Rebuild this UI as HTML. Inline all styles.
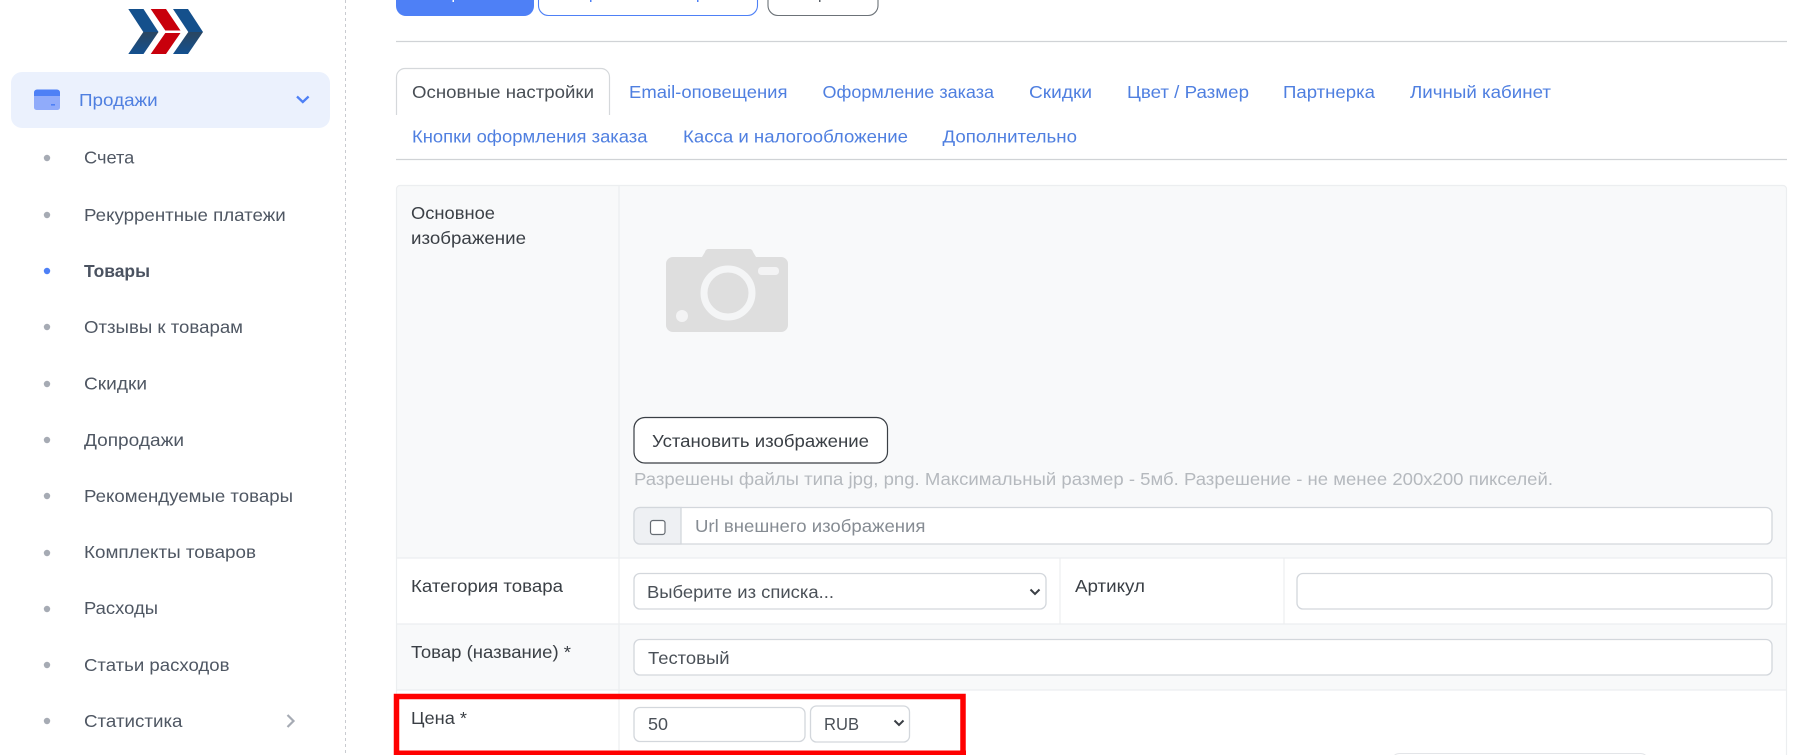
<!DOCTYPE html>
<html lang="ru"><head><meta charset="utf-8"><title>Товар</title>
<style>
html,body{margin:0;padding:0;background:#fff;width:1806px;height:755px;overflow:hidden}
svg{display:block}
text{font-family:"Liberation Sans","DejaVu Sans",sans-serif;font-size:17.5px}
.s{fill:#4f5763}.b{fill:#4f7fe0}.d{fill:#3a3f45}.g{fill:#b5b9be}.p{fill:#7b8188}
.i{fill:#fff;stroke:#d3d7dc;stroke-width:1.300}
.l{stroke:#eceef0;stroke-width:1.200;fill:none}
.c{fill:none;stroke:#3a3f45;stroke-width:1.8}
</style></head><body>
<svg xmlns="http://www.w3.org/2000/svg" width="1806" height="755" viewBox="0 0 1806 755">
<defs><linearGradient id="gr" x1="0" y1="0" x2="0" y2="1"><stop offset="0" stop-color="#2a4661"/><stop offset="1" stop-color="#14508f"/></linearGradient></defs>

<!-- logo -->
<polygon points="128.3,9 143.500,9 158.500,32 143.3,32" fill="#14508c"/>
<polygon points="143.3,32 158.500,32 143.500,54 128.3,54" fill="url(#gr)"/>
<polygon points="150.7,9 166,9 180.500,30.500 165.3,30.500" fill="#c8000c"/>
<polygon points="165.3,33 180.500,33 166,54 150.7,54" fill="#c8000c"/>
<polygon points="173,9 188,9 203,32 188.3,32" fill="#14508c"/>
<polygon points="188.3,32 203,32 188,54 173,54" fill="url(#gr)"/>

<!-- sidebar -->
<rect x="11" y="72" width="319" height="56" rx="11" fill="#ebf1fd"/>
<rect x="34" y="90" width="26" height="20" rx="2.5" fill="#90abfa"/>
<path d="M34 96v-3.500a3 3 0 0 1 3-3h20a3 3 0 0 1 3 3V96z" fill="#4e80f6"/>
<rect x="51" y="104" width="4" height="1.600" fill="#4e80f6"/>
<text x="79" y="106" class="b" textLength="78.700" lengthAdjust="spacingAndGlyphs">Продажи</text>
<path d="M297 96.500l5.800 5.500 5.800-5.500" fill="none" stroke="#4e80f6" stroke-width="2.300"/>

<g fill="#a6abb4">
<circle cx="47" cy="158" r="3.200"/><circle cx="47" cy="215" r="3.200"/>
<circle cx="47" cy="327" r="3.200"/><circle cx="47" cy="384" r="3.200"/><circle cx="47" cy="440" r="3.200"/>
<circle cx="47" cy="496" r="3.200"/><circle cx="47" cy="553" r="3.200"/><circle cx="47" cy="609" r="3.200"/>
<circle cx="47" cy="665" r="3.200"/><circle cx="47" cy="721" r="3.200"/>
</g>
<circle cx="47" cy="271" r="3.200" fill="#4e80f6"/>
<text x="84" y="163.500" class="s" textLength="50.300" lengthAdjust="spacingAndGlyphs">Счета</text>
<text x="84" y="221" class="s" textLength="201.700" lengthAdjust="spacingAndGlyphs">Рекуррентные платежи</text>
<text x="84" y="277" style="fill:#4a5260;font-weight:bold" textLength="66" lengthAdjust="spacingAndGlyphs">Товары</text>
<text x="84" y="333" class="s" textLength="159" lengthAdjust="spacingAndGlyphs">Отзывы к товарам</text>
<text x="84" y="389.500" class="s" textLength="63" lengthAdjust="spacingAndGlyphs">Скидки</text>
<text x="84" y="446" class="s" textLength="100" lengthAdjust="spacingAndGlyphs">Допродажи</text>
<text x="84" y="502" class="s" textLength="209" lengthAdjust="spacingAndGlyphs">Рекомендуемые товары</text>
<text x="84" y="558" class="s" textLength="172" lengthAdjust="spacingAndGlyphs">Комплекты товаров</text>
<text x="84" y="614" class="s" textLength="74" lengthAdjust="spacingAndGlyphs">Расходы</text>
<text x="84" y="671" class="s" textLength="145.500" lengthAdjust="spacingAndGlyphs">Статьи расходов</text>
<text x="84" y="727" class="s" textLength="98.500" lengthAdjust="spacingAndGlyphs">Статистика</text>
<path d="M287.500 715l6 6-6 6" fill="none" stroke="#a6abb4" stroke-width="2.200"/>
<line x1="345.500" y1="0" x2="345.500" y2="755" stroke="#c9cbd0" stroke-width="1" stroke-dasharray="3 3"/>

<!-- top buttons -->
<rect x="396" y="-20" width="138" height="36" rx="10" fill="#4e80f6"/>
<rect x="538.500" y="-20" width="219" height="35.500" rx="10" fill="#fff" stroke="#4e80f6" stroke-width="1.100"/>
<rect x="768" y="-20" width="110" height="35.500" rx="10" fill="#fff" stroke="#6c7278" stroke-width="1.100"/>
<rect x="452.500" y="0" width="1.500" height="2" fill="#fff"/>
<rect x="590" y="0" width="1.500" height="2" fill="#4e80f6"/><rect x="697" y="0" width="1.500" height="2" fill="#4e80f6"/>
<rect x="819" y="0" width="1.500" height="2" fill="#5a6068"/>
<line x1="396" y1="41.500" x2="1787" y2="41.500" stroke="#d0d3d6" stroke-width="1.300"/>

<!-- tabs -->
<path d="M396.500 115V77a8.500 8.500 0 0 1 8.500-8.500h196a8.500 8.500 0 0 1 8.500 8.500v38" fill="#fff" stroke="#d5d8db" stroke-width="1.200"/>
<text x="412" y="98" class="d" textLength="182" lengthAdjust="spacingAndGlyphs" style="fill:#484e55">Основные настройки</text>
<text x="629" y="98" class="b" textLength="158.500" lengthAdjust="spacingAndGlyphs">Email-оповещения</text>
<text x="822.500" y="98" class="b" textLength="171.500" lengthAdjust="spacingAndGlyphs">Оформление заказа</text>
<text x="1029" y="98" class="b" textLength="63" lengthAdjust="spacingAndGlyphs">Скидки</text>
<text x="1127" y="98" class="b" textLength="122" lengthAdjust="spacingAndGlyphs">Цвет / Размер</text>
<text x="1283" y="98" class="b" textLength="92" lengthAdjust="spacingAndGlyphs">Партнерка</text>
<text x="1410" y="98" class="b" textLength="141" lengthAdjust="spacingAndGlyphs">Личный кабинет</text>
<text x="412" y="142.500" class="b" textLength="235.500" lengthAdjust="spacingAndGlyphs">Кнопки оформления заказа</text>
<text x="683" y="142.500" class="b" textLength="225" lengthAdjust="spacingAndGlyphs">Касса и налогообложение</text>
<text x="942.500" y="142.500" class="b" textLength="134.500" lengthAdjust="spacingAndGlyphs">Дополнительно</text>
<line x1="396" y1="159.500" x2="1787" y2="159.500" stroke="#d0d3d6" stroke-width="1.300"/>

<!-- table -->
<path d="M396.500 558V189a3.500 3.500 0 0 1 3.500-3.500h1383a3.500 3.500 0 0 1 3.500 3.500v369z" fill="#f8f9fa"/>
<rect x="396.500" y="624" width="1390" height="66" fill="#f8f9fa"/>
<path d="M396.500 760V189a3.500 3.500 0 0 1 3.500-3.500h1383a3.500 3.500 0 0 1 3.500 3.500v571" class="l"/>
<line x1="396" y1="558" x2="1787" y2="558" class="l"/>
<line x1="396" y1="624" x2="1787" y2="624" class="l"/>
<line x1="396" y1="690" x2="1787" y2="690" class="l"/>
<line x1="619" y1="185" x2="619" y2="755" class="l"/>
<line x1="1060" y1="558" x2="1060" y2="624" class="l"/>
<line x1="1284" y1="558" x2="1284" y2="624" class="l"/>

<text x="411" y="219" class="d" textLength="84" lengthAdjust="spacingAndGlyphs">Основное</text>
<text x="411" y="244" class="d" textLength="115" lengthAdjust="spacingAndGlyphs">изображение</text>
<text x="411" y="592" class="d" textLength="152" lengthAdjust="spacingAndGlyphs">Категория товара</text>
<text x="411" y="658" class="d" textLength="160" lengthAdjust="spacingAndGlyphs">Товар (название) *</text>
<text x="411" y="724" class="d" textLength="56" lengthAdjust="spacingAndGlyphs">Цена *</text>
<text x="1075" y="592" class="d" textLength="70" lengthAdjust="spacingAndGlyphs">Артикул</text>

<!-- camera placeholder -->
<path d="M673 257h29l3-5a4 4 0 0 1 3-3h42a4 4 0 0 1 3 3l3 5h25a7 7 0 0 1 7 7v61a7 7 0 0 1-7 7H673a7 7 0 0 1-7-7v-61a7 7 0 0 1 7-7z" fill="#dedede"/>
<circle cx="728" cy="293" r="24" fill="none" stroke="#f4f5f6" stroke-width="7"/>
<rect x="758" y="267" width="21" height="8" rx="3.500" fill="#f3f3f4"/>
<circle cx="682" cy="316" r="6" fill="#f3f3f4"/>

<rect x="634" y="417.500" width="253.500" height="45.500" rx="11" fill="#fff" stroke="#3a3f45" stroke-width="1.200"/>
<text x="652" y="447" class="d" textLength="217" lengthAdjust="spacingAndGlyphs">Установить изображение</text>
<text x="634" y="485" class="g" textLength="919" lengthAdjust="spacingAndGlyphs">Разрешены файлы типа jpg, png. Максимальный размер - 5мб. Разрешение - не менее 200x200 пикселей.</text>

<!-- url input group -->
<rect x="634" y="507.500" width="1138" height="36.500" rx="6" class="i"/>
<path d="M681 507.500h-41a6 6 0 0 0-6 6v24.500a6 6 0 0 0 6 6h41z" fill="#eef0f3" stroke="#d3d7dc" stroke-width="1.300"/>
<rect x="650.500" y="520.500" width="14.500" height="14" rx="2.500" fill="#fff" stroke="#666c73" stroke-width="1.200"/>
<text x="695" y="532" class="p" textLength="230.500" lengthAdjust="spacingAndGlyphs" style="fill:#868c93">Url внешнего изображения</text>

<!-- category / article -->
<rect x="634" y="573.500" width="412" height="35.500" rx="6" class="i"/>
<text x="647" y="598" style="fill:#4b5158" textLength="187" lengthAdjust="spacingAndGlyphs">Выберите из списка...</text>
<path d="M1030.500 589.500l4.500 4.500 4.500-4.500" fill="none" stroke="#3a3f45" stroke-width="2"/>
<rect x="1297" y="573.500" width="475" height="35.500" rx="6" class="i"/>

<!-- name -->
<rect x="634" y="639.500" width="1138" height="35.500" rx="6" class="i"/>
<text x="648" y="664" style="fill:#4b5158" textLength="81.500" lengthAdjust="spacingAndGlyphs">Тестовый</text>

<!-- price -->
<rect x="634" y="707.500" width="171" height="34" rx="6" class="i"/>
<text x="648" y="730" style="fill:#4b5158" textLength="20" lengthAdjust="spacingAndGlyphs">50</text>
<rect x="810.500" y="706" width="99" height="36" rx="6" class="i"/>
<text x="824" y="730" style="fill:#4b5158" textLength="35" lengthAdjust="spacingAndGlyphs">RUB</text>
<path d="M894.500 720.500l4.500 4.500 4.500-4.500" fill="none" stroke="#3a3f45" stroke-width="2"/>

<rect x="1391.500" y="753.500" width="257" height="30" rx="8" fill="#fff" stroke="#e3e5e8" stroke-width="1"/>

<!-- annotation -->
<path d="M396.500 760V696.500h566.500V760" fill="none" stroke="#ff0000" stroke-width="5.500"/>
<line x1="394" y1="753" x2="966" y2="753" stroke="#ff0000" stroke-width="5"/>
</svg>
</body></html>
